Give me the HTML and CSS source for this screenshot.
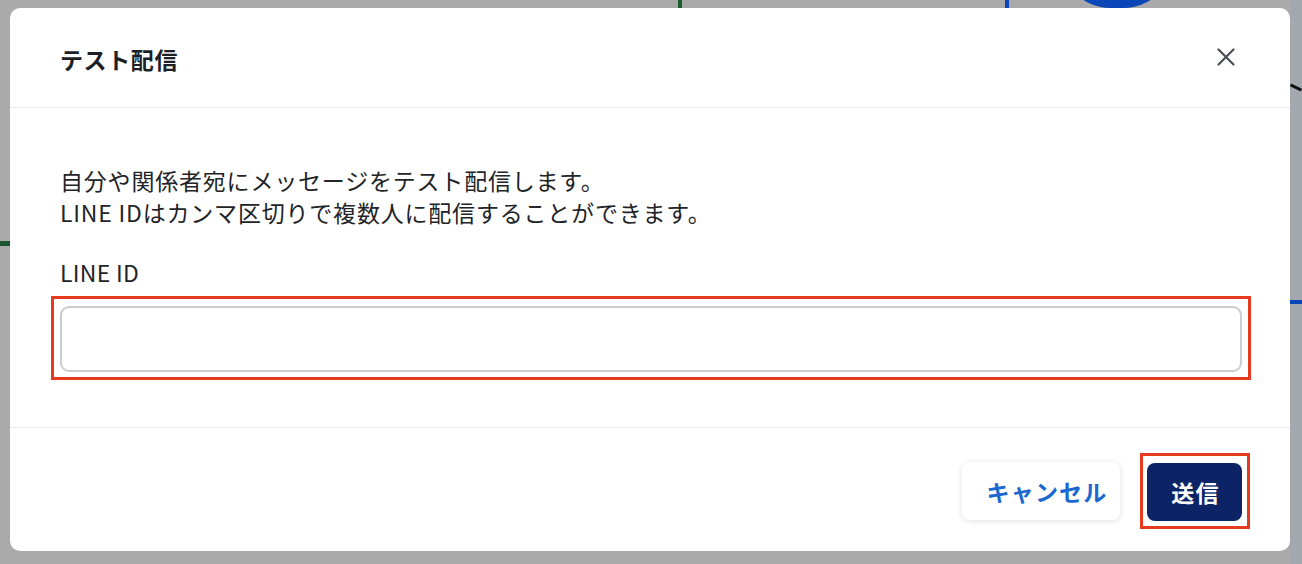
FILE: index.html
```html
<!DOCTYPE html>
<html lang="ja">
<head>
<meta charset="utf-8">
<title>テスト配信</title>
<link rel="stylesheet" href="styles.css">
</head>
<body>
<div class="backdrop">
  <div class="bg-right"></div>
  <div class="bg-green-top"></div>
  <div class="bg-blue-bar"></div>
  <div class="bg-blue-circle"></div>
  <div class="bg-green-left"></div>
  <div class="bg-blue-right"></div>
  <div class="bg-black-line"></div>

  <div class="modal" role="dialog">
    <header class="modal-header">
      <h2 class="modal-title">テスト配信</h2>
      <button class="close-btn" aria-label="閉じる">
        <svg width="18" height="18" viewBox="0 0 18 18"><path d="M1.5 1.5 L16.5 16.5 M16.5 1.5 L1.5 16.5" stroke="#4a4f57" stroke-width="2.2" stroke-linecap="round" fill="none"/></svg>
      </button>
    </header>
    <section class="modal-body">
      <p class="desc">自分や関係者宛にメッセージをテスト配信します。<br>LINE IDはカンマ区切りで複数人に配信することができます。</p>
      <label class="field-label" for="lineid">LINE ID</label>
      <div class="highlight highlight-input">
        <input id="lineid" class="field-input" type="text">
      </div>
    </section>
    <footer class="modal-footer">
      <button class="btn btn-cancel">キャンセル</button>
      <div class="highlight highlight-submit">
        <button class="btn btn-submit">送信</button>
      </div>
    </footer>
  </div>
</div>
</body>
</html>
```
FILE: styles.css
```css
html, body {
  margin: 0;
  padding: 0;
  height: 100%;
}
body {
  background: #aaaaaa;
  font-family: "Noto Sans CJK JP", "Noto Sans", sans-serif;
  color: #222428;
  overflow: hidden;
}
.backdrop {
  position: relative;
  height: 564px;
  padding: 8px 12px 13px 10px;
  box-sizing: border-box;
  display: flex;
}
.bg-right {
  position: absolute;
  right: 0;
  top: 0;
  width: 12px;
  height: 100%;
  background: #a3a8ae;
}
.bg-green-top {
  position: absolute;
  left: 678px;
  top: 0;
  width: 4px;
  height: 8px;
  background: #1d5a2c;
}
.bg-blue-bar {
  position: absolute;
  left: 1005px;
  top: 0;
  width: 4px;
  height: 8px;
  background: #0b46b8;
}
.bg-blue-circle {
  position: absolute;
  left: 1062px;
  top: -40px;
  width: 110px;
  height: 48px;
  border-radius: 0 0 55px 55px;
  background: #0b46b8;
}
.bg-green-left {
  position: absolute;
  left: 0;
  top: 241px;
  width: 10px;
  height: 5px;
  background: #1b5530;
}
.bg-blue-right {
  position: absolute;
  right: 0;
  top: 300px;
  width: 12px;
  height: 4px;
  background: #0b46b8;
}
.bg-black-line {
  position: absolute;
  right: 0;
  top: 86px;
  width: 12px;
  height: 3px;
  background: #111;
  transform: rotate(25deg);
}
.modal {
  position: relative;
  flex: 1;
  background: #ffffff;
  border-radius: 10px;
  display: flex;
  flex-direction: column;
  overflow: hidden;
}
.modal-header {
  height: 100px;
  box-sizing: border-box;
  border-bottom: 1px solid #ececee;
  display: flex;
  align-items: center;
  justify-content: space-between;
  padding: 2px 55px 0 50px;
}
.modal-title {
  margin: 0;
  font-size: 23px;
  font-weight: 700;
  color: #1c1f26;
  letter-spacing: 0.6px;
}
.close-btn {
  border: 0;
  background: transparent;
  padding: 0;
  width: 18px;
  height: 18px;
  display: flex;
  margin-top: -4px;
}
.modal-body {
  padding: 56px 49px 47px 50px;
  border-bottom: 1px solid #ececee;
  display: flex;
  flex-direction: column;
}
.desc {
  margin: 0;
  font-size: 23px;
  line-height: 32px;
  letter-spacing: 0.8px;
}
.field-label {
  margin-top: 28px;
  font-size: 23px;
  line-height: 32px;
  letter-spacing: 0.3px;
}
.highlight {
  border: 3px solid #e63b1f;
}
.highlight-input {
  margin: 8px -10px 0 -9px;
  padding: 7px 6px 5px 6px;
  display: flex;
  flex-direction: column;
}
.field-input {
  height: 66px;
  box-sizing: border-box;
  border: 2px solid #cbccd1;
  border-radius: 9px;
  background: #fff;
  outline: none;
  font-family: inherit;
  font-size: 20px;
  padding: 0 14px;
}
.modal-footer {
  flex: 1;
  display: flex;
  justify-content: flex-end;
  align-items: center;
  gap: 20px;
  padding: 2px 40px 0 0;
}
.highlight-submit {
  padding: 7px 5px 5px 4px;
  display: flex;
}
.btn {
  height: 58px;
  border-radius: 8px;
  font-family: inherit;
  font-size: 23px;
  font-weight: 700;
  border: 0;
  letter-spacing: 1.2px;
}
.btn-cancel {
  width: 158px;
  padding: 0 0 0 12px;
  background: #ffffff;
  color: #1a68d0;
  box-shadow: 0 1px 6px rgba(0, 0, 0, 0.13);
}
.btn-submit {
  width: 95px;
  padding: 0 0 0 2px;
  background: #0c2466;
  color: #ffffff;
}
```
